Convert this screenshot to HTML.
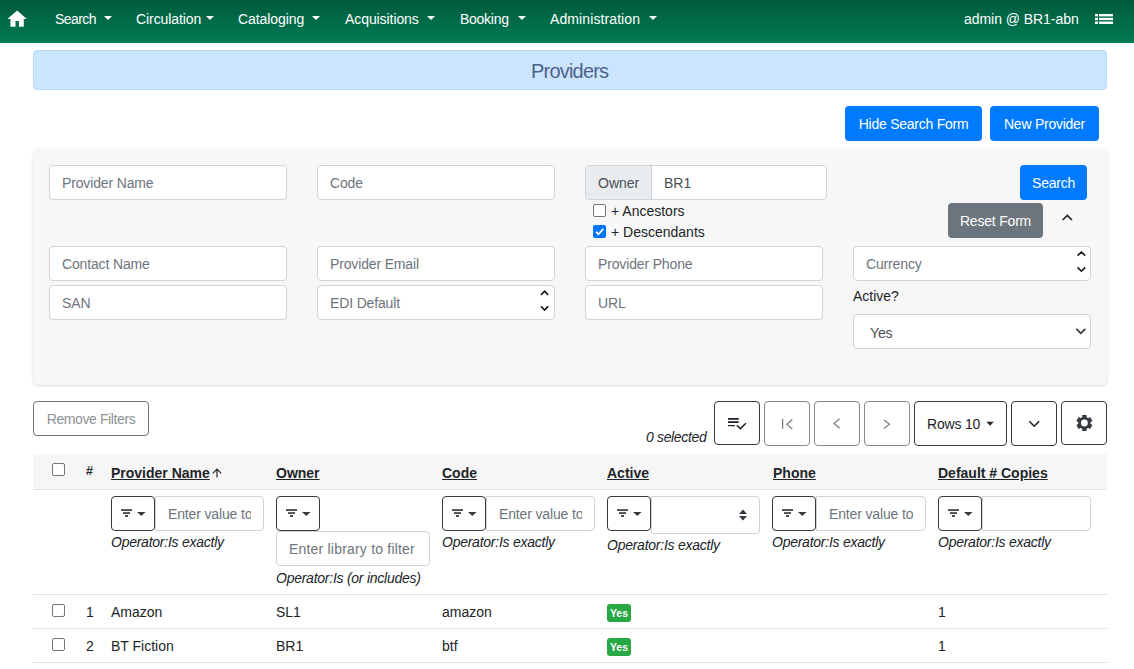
<!DOCTYPE html>
<html><head><meta charset="utf-8">
<style>
*{box-sizing:border-box;margin:0;padding:0}
html,body{width:1134px;height:669px;overflow:hidden;background:#fff}
body{font-family:"Liberation Sans",sans-serif;font-size:14px;color:#212529;position:relative}
.a{position:absolute}
.nav{left:0;top:0;width:1134px;height:43px;background:linear-gradient(#005b3e,#007b54)}
.nt{color:#fff;font-size:14px;top:11px;line-height:16px;white-space:nowrap}
.caret{display:inline-block;width:0;height:0;border-left:4px solid transparent;border-right:4px solid transparent;border-top:4px solid #fff;vertical-align:3px;margin-left:6px}
.title{left:33px;top:50px;width:1074px;height:40px;background:#cce5ff;border:1px solid #b8daff;border-radius:4px}
.title span{position:absolute;left:497px;top:9px;font-size:20px;letter-spacing:-0.8px;color:#4d6389;line-height:22px}
.btn{border-radius:4px;text-align:center;white-space:nowrap;font-size:14px}
.bp{background:#007bff;color:#fff;letter-spacing:-0.25px}
.panel{left:33px;top:149px;width:1074px;height:236px;background:#f7f7f7;border-radius:6px;box-shadow:0 1px 3px rgba(0,0,0,.15)}
.inp{background:#fff;border:1px solid #ced4da;border-radius:4px;height:35px;color:#6c757d;padding-left:12px;line-height:35px;letter-spacing:-0.15px;white-space:nowrap;overflow:hidden}
.cb{width:13px;height:13px;border:1px solid #767676;border-radius:2px;background:#fff}
.lbl{color:#212529;line-height:16px;white-space:nowrap}
.ob{border:1px solid #343a40;border-radius:4px;background:#fff}
.od{border:1px solid #878c91;border-radius:4px;background:#fff}
.hd{font-weight:bold;text-decoration:underline;color:#212529;top:465px;line-height:16px;white-space:nowrap}
.fb{width:44px;height:35px;border:1px solid #343a40;border-radius:4px;background:#fff}
.fi{height:35px;padding-right:12px;letter-spacing:-0.15px;border:1px solid #ced4da;border-radius:0 4px 4px 0;background:#fff;color:#6c757d;padding-left:12px;line-height:35px;overflow:hidden;white-space:nowrap}
.op{font-style:italic;color:#212529;letter-spacing:-0.25px;line-height:16px;white-space:nowrap;font-size:14px}
.cell{line-height:16px;white-space:nowrap;color:#212529}
.hr{left:33px;width:1074px;height:1px;background:#dee2e6}
.badge{background:#28a745;color:#fff;font-weight:bold;font-size:10.5px;border-radius:3px;text-align:center;line-height:16px}
</style></head><body>
<!-- navbar -->
<div class="a nav"></div>
<svg class="a" style="left:0;top:0" width="40" height="43" viewBox="0 0 40 43"><path d="M17.1 10.4 L26.8 18.9 L23.8 18.9 L23.8 26.8 L18.9 26.8 L18.9 20.9 L15.5 20.9 L15.5 26.8 L10.4 26.8 L10.4 18.9 L7.4 18.9 Z" fill="#fff"/></svg>
<div class="a nt" style="left:55px;letter-spacing:-0.55px">Search</div>
<div class="a nt" style="left:136px;letter-spacing:-0.08px">Circulation</div>
<div class="a nt" style="left:238px;letter-spacing:-0.08px">Cataloging</div>
<div class="a nt" style="left:345px;letter-spacing:-0.08px">Acquisitions</div>
<div class="a nt" style="left:460px;letter-spacing:-0.27px">Booking</div>
<div class="a nt" style="left:550px;letter-spacing:0.1px">Administration</div>
<svg class="a" style="left:0;top:0" width="700" height="43" viewBox="0 0 700 43"><g fill="#fff"><path d="M104 16 H112 L108 20 Z"/><path d="M206 16 H214 L210 20 Z"/><path d="M312 16 H320 L316 20 Z"/><path d="M427 16 H435 L431 20 Z"/><path d="M518 16 H526 L522 20 Z"/><path d="M649 16 H657 L653 20 Z"/></g></svg>
<div class="a nt" style="left:964px;letter-spacing:-0.05px">admin @ BR1-abn</div>
<svg class="a" style="left:1090px;top:8px" width="30" height="22" viewBox="1090 8 30 22"><g fill="#fff"><rect x="1095" y="14" width="3" height="2.4"/><rect x="1099" y="14" width="14" height="2.4"/><rect x="1095" y="17.8" width="3" height="2.3"/><rect x="1099" y="17.8" width="14" height="2.3"/><rect x="1095" y="21.5" width="3" height="2.5"/><rect x="1099" y="21.5" width="14" height="2.5"/></g></svg>

<!-- title -->
<div class="a title"><span>Providers</span></div>
<div class="a btn bp" style="left:845px;top:106px;width:137px;height:35px;line-height:37px">Hide Search Form</div>
<div class="a btn bp" style="left:990px;top:106px;width:109px;height:35px;line-height:37px">New Provider</div>

<!-- search panel -->
<div class="a panel"></div>
<div class="a inp" style="left:49px;top:165px;width:238px">Provider Name</div>
<div class="a inp" style="left:317px;top:165px;width:238px">Code</div>
<div class="a" style="left:585px;top:165px;width:242px;height:35px;border:1px solid #ced4da;border-radius:4px;background:#fff;overflow:hidden">
  <div class="a" style="left:0;top:0;width:66px;height:33px;background:#e9ecef;border-right:1px solid #ced4da;color:#495057;line-height:35px;padding-left:12px">Owner</div>
  <div class="a" style="left:78px;top:0;line-height:35px;color:#495057">BR1</div>
</div>
<div class="a cb" style="left:593px;top:204px"></div>
<div class="a lbl" style="left:611px;top:203px">+ Ancestors</div>
<div class="a" style="left:593px;top:225px;width:13px;height:13px;background:#0075ff;border-radius:2px"></div>
<svg class="a" style="left:593px;top:225px" width="13" height="13" viewBox="0 0 13 13"><path d="M3 6.8 L5.5 9.3 L10.3 3.8" stroke="#fff" stroke-width="1.8" fill="none"/></svg>
<div class="a lbl" style="left:611px;top:224px">+ Descendants</div>

<div class="a btn bp" style="left:1020px;top:165px;width:67px;height:35px;line-height:37px">Search</div>
<div class="a btn" style="left:948px;top:203px;width:95px;height:35px;line-height:37px;background:#6c757d;color:#fff;letter-spacing:-0.2px">Reset Form</div>
<svg class="a" style="left:1061px;top:213px" width="12" height="9" viewBox="0 0 12 9"><path d="M1.6 7 L6.3 2.4 L11 7" stroke="#212529" stroke-width="1.7" fill="none"/></svg>

<div class="a inp" style="left:49px;top:246px;width:238px">Contact Name</div>
<div class="a inp" style="left:317px;top:246px;width:238px">Provider Email</div>
<div class="a inp" style="left:585px;top:246px;width:238px">Provider Phone</div>
<div class="a inp" style="left:853px;top:246px;width:238px">Currency</div>
<svg class="a" style="left:1072px;top:248px" width="18" height="28" viewBox="1072 248 18 28"><path d="M1077.6 255.6 L1081.4 252 L1085.2 255.6 M1077.6 267.4 L1081.4 271.2 L1085.2 267.4" stroke="#111" stroke-width="1.6" fill="none"/></svg>

<div class="a inp" style="left:49px;top:285px;width:238px">SAN</div>
<div class="a inp" style="left:317px;top:285px;width:238px">EDI Default</div>
<svg class="a" style="left:536px;top:286px" width="16" height="30" viewBox="536 286 16 30"><path d="M541 295 L544.6 291.2 L548.2 295 M541 306.3 L544.6 310.1 L548.2 306.3" stroke="#111" stroke-width="1.6" fill="none"/></svg>
<div class="a inp" style="left:585px;top:285px;width:238px">URL</div>
<div class="a lbl" style="left:853px;top:288px">Active?</div>
<div class="a inp" style="left:853px;top:314px;width:238px;color:#495057;padding-left:16px;line-height:37px">Yes</div>
<svg class="a" style="left:1075px;top:327px" width="12" height="9" viewBox="0 0 12 9"><path d="M1.3 1.8 L5.8 6.3 L10.3 1.8" stroke="#343a40" stroke-width="1.8" fill="none"/></svg>

<!-- toolbar -->
<div class="a btn" style="left:33px;top:401px;width:116px;height:35px;line-height:35px;border:1px solid #6c757d;color:#8e9397;letter-spacing:-0.4px">Remove Filters</div>
<div class="a op" style="left:646px;top:429px;letter-spacing:-0.35px">0 selected</div>
<div class="a ob" style="left:714px;top:401px;width:46px;height:44px"></div>
<div class="a od" style="left:764px;top:401px;width:46px;height:45px"></div>
<div class="a od" style="left:814px;top:401px;width:46px;height:45px"></div>
<div class="a od" style="left:864px;top:401px;width:46px;height:45px"></div>
<div class="a ob" style="left:914px;top:401px;width:93px;height:45px"></div>
<div class="a cell" style="left:927px;top:416px;letter-spacing:-0.2px">Rows 10</div>
<div class="a ob" style="left:1011px;top:401px;width:46px;height:45px"></div>
<div class="a ob" style="left:1061px;top:401px;width:46px;height:44px"></div>
<svg class="a" style="left:700px;top:395px" width="410" height="55" viewBox="700 395 410 55">
 <g fill="#212529">
  <rect x="728" y="418" width="10.7" height="1.8"/><rect x="728" y="421.2" width="10.7" height="1.8"/><rect x="728" y="425" width="7" height="1.2"/>
 </g>
 <path d="M736.8 425.3 L740.3 428.6 L745.9 423.2" stroke="#212529" stroke-width="1.5" fill="none"/>
 <g stroke="#7b8085" stroke-width="1.3" fill="none">
  <path d="M782.6 418.8 V428.9"/><path d="M792.3 419.6 L786.8 424.3 L792.3 428.9"/>
  <path d="M839.6 418.8 L834 423.5 L839.6 428.2"/>
  <path d="M884 420 L889.4 424.3 L884 428.6"/>
 </g>
 <path d="M986.4 421.7 L993.8 421.7 L990.1 425.8 Z" fill="#212529"/>
 <path d="M1029.3 421.2 L1034.2 426.2 L1039.1 421.2" stroke="#212529" stroke-width="1.6" fill="none"/>
 <g fill="#343a40" transform="translate(1084.4 423)">
  <circle r="6.2"/>
  <rect x="-2.2" y="-8" width="4.4" height="16" />
  <rect x="-2.2" y="-8" width="4.4" height="16" transform="rotate(60)"/>
  <rect x="-2.2" y="-8" width="4.4" height="16" transform="rotate(120)"/>
  <circle r="3.4" fill="#fff"/>
 </g>
</svg>

<!-- table header -->
<div class="a" style="left:33px;top:454px;width:1074px;height:35px;background:#f6f6f6"></div>
<div class="a hr" style="top:489px"></div>
<div class="a cb" style="left:52px;top:463px"></div>
<div class="a hd" style="left:86px;top:463px;font-size:12.5px;text-decoration:none">#</div>
<div class="a hd" style="left:111px">Provider Name</div>
<svg class="a" style="left:210px;top:466px" width="14" height="14" viewBox="210 466 14 14"><path d="M217 469.2 V477.6 M212.8 473.4 L217 469.2 L221.2 473.4" stroke="#212529" stroke-width="1.2" fill="none"/></svg>
<div class="a hd" style="left:276px">Owner</div>
<div class="a hd" style="left:442px">Code</div>
<div class="a hd" style="left:607px">Active</div>
<div class="a hd" style="left:773px">Phone</div>
<div class="a hd" style="left:938px">Default # Copies</div>

<!-- filter row -->
<div class="a fb" style="left:111px;top:496px"></div><svg class="a" style="left:111px;top:496px" width="44" height="35" viewBox="0 0 44 35"><g fill="#343a40"><rect x="10" y="13.2" width="11" height="1.7"/><rect x="12" y="16.2" width="7" height="1.7"/><rect x="14" y="19.1" width="3" height="1.8"/><path d="M26 16 L34.6 16 L30.3 20 Z"/></g></svg>
<div class="a fi" style="left:155px;top:496px;width:109px"><span style="display:block;overflow:hidden">Enter value to filter</span></div>
<div class="a op" style="left:111px;top:534px">Operator:Is exactly</div>

<div class="a" style="left:276px;top:496px;width:44px;height:35px;border:1px solid #343a40;border-radius:4px;background:#fff"></div><svg class="a" style="left:276px;top:496px" width="44" height="35" viewBox="0 0 44 35"><g fill="#343a40"><rect x="10" y="13.2" width="11" height="1.7"/><rect x="12" y="16.2" width="7" height="1.7"/><rect x="14" y="19.1" width="3" height="1.8"/><path d="M26 16 L34.6 16 L30.3 20 Z"/></g></svg>
<div class="a inp" style="left:276px;top:531px;width:154px;letter-spacing:0.2px">Enter library to filter</div>
<div class="a op" style="left:276px;top:570px">Operator:Is (or includes)</div>

<div class="a fb" style="left:442px;top:496px"></div><svg class="a" style="left:442px;top:496px" width="44" height="35" viewBox="0 0 44 35"><g fill="#343a40"><rect x="10" y="13.2" width="11" height="1.7"/><rect x="12" y="16.2" width="7" height="1.7"/><rect x="14" y="19.1" width="3" height="1.8"/><path d="M26 16 L34.6 16 L30.3 20 Z"/></g></svg>
<div class="a fi" style="left:486px;top:496px;width:109px"><span style="display:block;overflow:hidden">Enter value to filter</span></div>
<div class="a op" style="left:442px;top:534px">Operator:Is exactly</div>

<div class="a fb" style="left:607px;top:496px"></div><svg class="a" style="left:607px;top:496px" width="44" height="35" viewBox="0 0 44 35"><g fill="#343a40"><rect x="10" y="13.2" width="11" height="1.7"/><rect x="12" y="16.2" width="7" height="1.7"/><rect x="14" y="19.1" width="3" height="1.8"/><path d="M26 16 L34.6 16 L30.3 20 Z"/></g></svg>
<div class="a fi" style="left:651px;top:496px;width:109px;height:38px"></div>
<svg class="a" style="left:738px;top:508px" width="10" height="14" viewBox="0 0 10 14"><path d="M1 6 L5 1.5 L9 6 Z M1 8 L5 12.5 L9 8 Z" fill="#343a40"/></svg>
<div class="a op" style="left:607px;top:537px">Operator:Is exactly</div>

<div class="a fb" style="left:772px;top:496px"></div><svg class="a" style="left:772px;top:496px" width="44" height="35" viewBox="0 0 44 35"><g fill="#343a40"><rect x="10" y="13.2" width="11" height="1.7"/><rect x="12" y="16.2" width="7" height="1.7"/><rect x="14" y="19.1" width="3" height="1.8"/><path d="M26 16 L34.6 16 L30.3 20 Z"/></g></svg>
<div class="a fi" style="left:816px;top:496px;width:110px"><span style="display:block;overflow:hidden">Enter value to filter</span></div>
<div class="a op" style="left:772px;top:534px">Operator:Is exactly</div>

<div class="a fb" style="left:938px;top:496px"></div><svg class="a" style="left:938px;top:496px" width="44" height="35" viewBox="0 0 44 35"><g fill="#343a40"><rect x="10" y="13.2" width="11" height="1.7"/><rect x="12" y="16.2" width="7" height="1.7"/><rect x="14" y="19.1" width="3" height="1.8"/><path d="M26 16 L34.6 16 L30.3 20 Z"/></g></svg>
<div class="a fi" style="left:982px;top:496px;width:109px"></div>
<div class="a op" style="left:938px;top:534px">Operator:Is exactly</div>

<div class="a hr" style="top:594px"></div>

<!-- rows -->
<div class="a cb" style="left:52px;top:604px"></div>
<div class="a cell" style="left:86px;top:604px">1</div>
<div class="a cell" style="left:111px;top:604px">Amazon</div>
<div class="a cell" style="left:276px;top:604px">SL1</div>
<div class="a cell" style="left:442px;top:604px">amazon</div>
<div class="a badge" style="left:607px;top:604px;width:24px;height:18px;line-height:18px">Yes</div>
<div class="a cell" style="left:938px;top:604px">1</div>
<div class="a hr" style="top:628px"></div>

<div class="a cb" style="left:52px;top:638px"></div>
<div class="a cell" style="left:86px;top:638px">2</div>
<div class="a cell" style="left:111px;top:638px">BT Fiction</div>
<div class="a cell" style="left:276px;top:638px">BR1</div>
<div class="a cell" style="left:442px;top:638px">btf</div>
<div class="a badge" style="left:607px;top:638px;width:24px;height:18px;line-height:18px">Yes</div>
<div class="a cell" style="left:938px;top:638px">1</div>
<div class="a hr" style="top:662px"></div>

</body></html>
